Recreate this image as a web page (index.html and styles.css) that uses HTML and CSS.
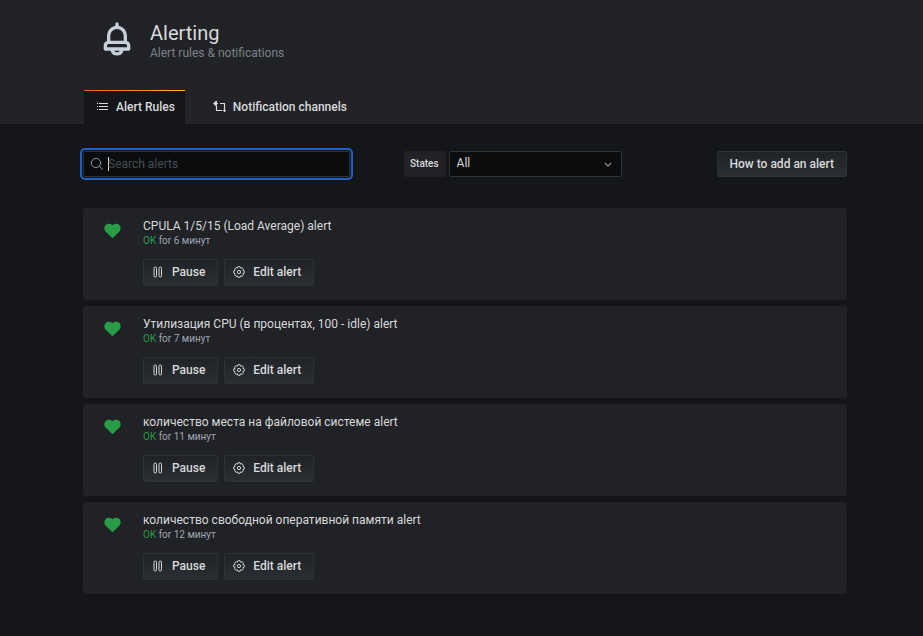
FILE: index.html
```html
<!DOCTYPE html>
<html lang="en">
<head>
<meta charset="utf-8">
<title>Alerting</title>
<link rel="stylesheet" href="styles.css">
</head>
<body>
<svg class="sprite" aria-hidden="true">
  <symbol id="heart" viewBox="0 0 18 16"><path d="M9 15.600 1.900 8.900C-.1 7-.1 3.700 1.600 1.900 3.500-.1 6.600-.1 8.500 1.500L9 1.900l.5-.4C11.400-.1 14.500-.1 16.400 1.900 18.100 3.700 18.100 7 16.100 8.900Z" fill="currentColor"/></symbol>
  <symbol id="pause" viewBox="0 0 24 24"><g fill="none" stroke="currentColor" stroke-width="2"><rect x="4" y="2" width="5" height="20" rx="2.500"/><rect x="14" y="2" width="5" height="20" rx="2.500"/></g></symbol>
  <symbol id="cog" viewBox="0 0 24 24"><g fill="none" stroke="currentColor" stroke-width="2" stroke-linejoin="round"><path d="M19.700 8.800A3.200 3.200 0 0 1 19.700 15.200A3.200 3.200 0 0 1 15.200 19.700A3.200 3.200 0 0 1 8.800 19.700A3.200 3.200 0 0 1 4.300 15.200A3.200 3.200 0 0 1 4.300 8.800A3.200 3.200 0 0 1 8.800 4.300A3.200 3.200 0 0 1 15.200 4.300A3.200 3.200 0 0 1 19.700 8.800Z"/><circle cx="12" cy="12" r="3.200"/></g></symbol>
</svg>

<header class="page-header">
  <div class="container">
    <div class="heading">
      <svg class="bell" viewBox="0 0 24 24" aria-hidden="true"><path fill="currentColor" d="M18,13.180V10a6,6,0,0,0-5-5.910V3a1,1,0,0,0-2,0V4.090A6,6,0,0,0,6,10v3.180A3,3,0,0,0,4,16v2a1,1,0,0,0,1,1H8.140a4,4,0,0,0,7.720,0H19a1,1,0,0,0,1-1V16A3,3,0,0,0,18,13.180ZM8,10a4,4,0,0,1,8,0v3H8Zm4,10a2,2,0,0,1-1.720-1h3.440A2,2,0,0,1,12,20Zm6-3H6V16a1,1,0,0,1,1-1H17a1,1,0,0,1,1,1Z"/></svg>
      <div>
        <h1>Alerting</h1>
        <p>Alert rules &amp; notifications</p>
      </div>
    </div>
    <nav class="tabs">
      <a class="tab active" href="#rules"><svg class="icon" viewBox="0 0 14 14" aria-hidden="true"><path d="M1 3.500h1M1 6.500h1M1 9.500h1M3 3.500h9M3 6.500h9M3 9.500h9" stroke="currentColor" fill="none"/></svg>Alert Rules</a>
      <a class="tab" href="#channels"><svg class="icon" viewBox="0 0 14 14" aria-hidden="true"><path d="M3.500 1 .8 3.500 3.500 6M1 3.500h4M7 3.500h4.500v5.500M3.500 6v4.500h5.500M11.500 9v3M10 10.500h3" stroke="currentColor" stroke-width="1.200" fill="none"/><path d="M1 3.500 4 1v5Z" fill="currentColor"/></svg>Notification channels</a>
    </nav>
  </div>
</header>

<main class="container">
  <div class="toolbar">
    <label class="search">
      <svg class="icon" viewBox="0 0 14 14" aria-hidden="true"><g fill="none" stroke="currentColor" stroke-linecap="round"><circle cx="6" cy="6" r="4.700"/><path d="m9.500 9.500 3 3"/></g></svg>
      <span class="caret"></span>
      <input type="text" placeholder="Search alerts" aria-label="Search alerts">
    </label>
    <div class="states">
      <label for="states">States</label>
      <div class="select">
        <select id="states"><option>All</option></select>
        <svg viewBox="0 0 8 8" aria-hidden="true"><path d="m1 3 3 3 3-3" fill="none" stroke="currentColor" stroke-width="1.200"/></svg>
      </div>
    </div>
    <button class="btn howto" type="button">How to add an alert</button>
  </div>

  <ul class="rules">
    <li class="rule">
      <svg class="heart" aria-hidden="true"><use href="#heart"/></svg>
      <div>
        <h2>CPULA 1/5/15 (Load Average) alert</h2>
        <p><span class="ok">OK</span> for 6 минут</p>
        <div class="actions">
          <button class="btn" type="button"><svg class="icon"><use href="#pause"/></svg>Pause</button>
          <button class="btn" type="button"><svg class="icon"><use href="#cog"/></svg>Edit alert</button>
        </div>
      </div>
    </li>
    <li class="rule">
      <svg class="heart" aria-hidden="true"><use href="#heart"/></svg>
      <div>
        <h2>Утилизация CPU (в процентах, 100 - idle) alert</h2>
        <p><span class="ok">OK</span> for 7 минут</p>
        <div class="actions">
          <button class="btn" type="button"><svg class="icon"><use href="#pause"/></svg>Pause</button>
          <button class="btn" type="button"><svg class="icon"><use href="#cog"/></svg>Edit alert</button>
        </div>
      </div>
    </li>
    <li class="rule">
      <svg class="heart" aria-hidden="true"><use href="#heart"/></svg>
      <div>
        <h2>количество места на файловой системе alert</h2>
        <p><span class="ok">OK</span> for 11 минут</p>
        <div class="actions">
          <button class="btn" type="button"><svg class="icon"><use href="#pause"/></svg>Pause</button>
          <button class="btn" type="button"><svg class="icon"><use href="#cog"/></svg>Edit alert</button>
        </div>
      </div>
    </li>
    <li class="rule">
      <svg class="heart" aria-hidden="true"><use href="#heart"/></svg>
      <div>
        <h2>количество свободной оперативной памяти alert</h2>
        <p><span class="ok">OK</span> for 12 минут</p>
        <div class="actions">
          <button class="btn" type="button"><svg class="icon"><use href="#pause"/></svg>Pause</button>
          <button class="btn" type="button"><svg class="icon"><use href="#cog"/></svg>Edit alert</button>
        </div>
      </div>
    </li>
  </ul>
</main>
</body>
</html>
```

FILE: styles.css
```css
* { box-sizing: border-box; }

body {
  margin: 0;
  min-height: 100vh;
  background: #141619;
  color: #d8d9da;
  font: 12px/16px Roboto, "Liberation Sans", sans-serif;
}

h1, h2, p, ul { margin: 0; padding: 0; font-weight: 400; }
ul { list-style: none; }
.sprite { display: none; }
.icon { width: 14px; height: 14px; flex: none; }
.container { padding: 0 76px 0 83px; }

.page-header {
  background: linear-gradient(#202226, #222327);
  border-bottom: 1px solid #25272b;
}
.heading {
  display: flex;
  gap: 13px;
  padding: 19px 0 0 14px;
  height: 90px;
}
.bell { width: 40px; height: 40px; color: #c7d0d9; }
.heading h1 { font-size: 20px; line-height: 28px; }
.heading p { color: #7b8087; line-height: 12px; }

.tabs { display: flex; gap: 16px; padding-left: 1px; }
.tab {
  display: flex;
  align-items: center;
  gap: 6px;
  height: 33px;
  padding: 0 12px;
  color: #d8d9da;
  font-weight: 500;
  text-decoration: none;
}
.tab.active {
  height: 34px;
  margin-bottom: -1px;
  padding: 0 10px 0 12px;
  background: linear-gradient(90deg, #f05a28, #fbca0a) top / 100% 1px no-repeat #141619;
}

.toolbar { display: flex; align-items: center; padding: 27px 0 31px; }
.search {
  display: flex;
  align-items: center;
  width: 267px;
  height: 26px;
  padding-left: 6px;
  border: 1px solid #2c3235;
  border-radius: 2px;
  outline: 2px solid #1f60c4;
  outline-offset: 1px;
  background: #0b0c0e;
  color: #8e9299;
}
.caret { width: 1px; height: 14px; margin: 0 -1px 0 4px; background: #d8d9da; }
.search input {
  flex: 1;
  min-width: 0;
  padding: 0;
  border: 0;
  outline: 0;
  background: none;
  color: #d8d9da;
  font: inherit;
}
.search input::placeholder { color: #464c54; opacity: 1; }

.states { display: flex; gap: 3px; margin-left: 54px; }
.states label {
  padding: 0 7px 0 6px;
  border-radius: 2px;
  background: #202226;
  font-size: 10px;
  font-weight: 500;
  line-height: 26px;
}
.select { position: relative; width: 173px; }
.select select {
  appearance: none;
  width: 100%;
  height: 26px;
  padding: 0 7px 2px;
  border: 1px solid #2c3235;
  border-radius: 2px;
  background: #0b0c0e;
  color: #d8d9da;
  font: inherit;
}
.select svg {
  position: absolute;
  top: 9px;
  right: 10px;
  width: 8px;
  height: 8px;
  color: #8e8e8e;
  pointer-events: none;
}

.btn {
  display: flex;
  align-items: center;
  gap: 8px;
  height: 27px;
  padding: 0 12px 1px 8px;
  border: 1px solid #2c3235;
  border-radius: 2px;
  background: linear-gradient(#202226, #2a2e32);
  color: #d8d9da;
  font: 500 12px/16px Roboto, "Liberation Sans", sans-serif;
}
.btn .icon { width: 12px; height: 12px; }
.howto { height: 26px; margin-left: auto; padding: 0 12px; }

.rules { display: flex; flex-direction: column; gap: 6px; }
.rule {
  display: flex;
  gap: 22px;
  height: 92px;
  padding: 10px 21px;
  border-radius: 3px;
  background: #202226;
}
.heart { width: 17px; height: 16px; margin-top: 5px; color: #299c46; }
.rule h2 { font-size: 12px; line-height: 16px; }
.rule p { color: #9fa7b3; font-size: 10px; line-height: 14px; }
.ok { color: #299c46; }
.actions { display: flex; gap: 6px; margin-top: 11px; }
```
